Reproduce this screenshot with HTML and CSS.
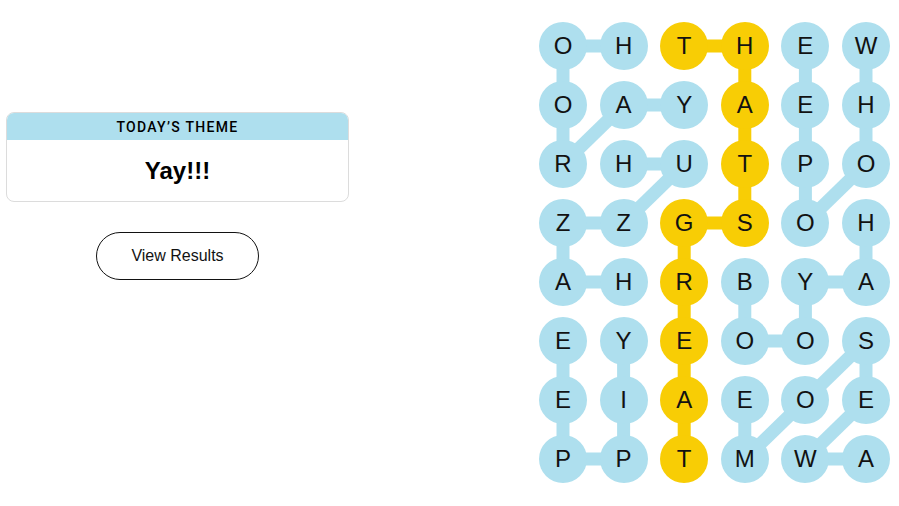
FILE: index.html
```html
<!DOCTYPE html>
<html lang="en">
<head>
<meta charset="utf-8">
<title>Strands</title>
<link rel="stylesheet" href="styles.css">
</head>
<body>
<main class="page">
  <section class="side">
    <div class="theme-card">
      <div class="theme-head">TODAY’S THEME</div>
      <div class="theme-body">Yay!!!</div>
    </div>
    <button class="results-btn" type="button">View Results</button>
  </section>
  <section class="board">
    <svg class="links" width="351" height="461" viewBox="0 0 351 461" aria-hidden="true">
      <g stroke="#aedfee" stroke-width="13" stroke-linecap="butt" fill="none">
        <!-- HOORAY -->
        <line x1="84.6" y1="24" x2="24" y2="24"/>
        <line x1="24" y1="24" x2="24" y2="83"/>
        <line x1="24" y1="83" x2="24" y2="142"/>
        <line x1="24" y1="142" x2="84.6" y2="83"/>
        <line x1="84.6" y1="83" x2="145.2" y2="83"/>
        <!-- HUZZAH -->
        <line x1="84.6" y1="142" x2="145.2" y2="142"/>
        <line x1="145.2" y1="142" x2="84.6" y2="201"/>
        <line x1="84.6" y1="201" x2="24" y2="201"/>
        <line x1="24" y1="201" x2="24" y2="260"/>
        <line x1="24" y1="260" x2="84.6" y2="260"/>
        <!-- WHOOPEE -->
        <line x1="327" y1="24" x2="327" y2="83"/>
        <line x1="327" y1="83" x2="327" y2="142"/>
        <line x1="327" y1="142" x2="266.4" y2="201"/>
        <line x1="266.4" y1="201" x2="266.4" y2="142"/>
        <line x1="266.4" y1="142" x2="266.4" y2="83"/>
        <line x1="266.4" y1="83" x2="266.4" y2="24"/>
        <!-- BOOYAH -->
        <line x1="327" y1="201" x2="327" y2="260"/>
        <line x1="327" y1="260" x2="266.4" y2="260"/>
        <line x1="266.4" y1="260" x2="266.4" y2="319"/>
        <line x1="266.4" y1="319" x2="205.8" y2="319"/>
        <line x1="205.8" y1="319" x2="205.8" y2="260"/>
        <!-- YIPPEE -->
        <line x1="24" y1="319" x2="24" y2="378"/>
        <line x1="24" y1="378" x2="24" y2="437"/>
        <line x1="24" y1="437" x2="84.6" y2="437"/>
        <line x1="84.6" y1="437" x2="84.6" y2="378"/>
        <line x1="84.6" y1="378" x2="84.6" y2="319"/>
        <!-- AWESOME -->
        <line x1="327" y1="437" x2="266.4" y2="437"/>
        <line x1="266.4" y1="437" x2="327" y2="378"/>
        <line x1="327" y1="378" x2="327" y2="319"/>
        <line x1="327" y1="319" x2="266.4" y2="378"/>
        <line x1="266.4" y1="378" x2="205.8" y2="437"/>
        <line x1="205.8" y1="437" x2="205.8" y2="378"/>
      </g>
      <g stroke="#f8cd05" stroke-width="13" fill="none">
        <line x1="145.2" y1="24" x2="205.8" y2="24"/>
        <line x1="205.8" y1="24" x2="205.8" y2="201"/>
        <line x1="205.8" y1="201" x2="145.2" y2="201"/>
        <line x1="145.2" y1="201" x2="145.2" y2="437"/>
      </g>
    </svg>
    <div class="grid">
      <span class="cell">O</span><span class="cell">H</span><span class="cell gold">T</span><span class="cell gold">H</span><span class="cell">E</span><span class="cell">W</span>
      <span class="cell">O</span><span class="cell">A</span><span class="cell">Y</span><span class="cell gold">A</span><span class="cell">E</span><span class="cell">H</span>
      <span class="cell">R</span><span class="cell">H</span><span class="cell">U</span><span class="cell gold">T</span><span class="cell">P</span><span class="cell">O</span>
      <span class="cell">Z</span><span class="cell">Z</span><span class="cell gold">G</span><span class="cell gold">S</span><span class="cell">O</span><span class="cell">H</span>
      <span class="cell">A</span><span class="cell">H</span><span class="cell gold">R</span><span class="cell">B</span><span class="cell">Y</span><span class="cell">A</span>
      <span class="cell">E</span><span class="cell">Y</span><span class="cell gold">E</span><span class="cell">O</span><span class="cell">O</span><span class="cell">S</span>
      <span class="cell">E</span><span class="cell">I</span><span class="cell gold">A</span><span class="cell">E</span><span class="cell">O</span><span class="cell">E</span>
      <span class="cell">P</span><span class="cell">P</span><span class="cell gold">T</span><span class="cell">M</span><span class="cell">W</span><span class="cell">A</span>
    </div>
  </section>
</main>
</body>
</html>
```
FILE: styles.css
```css
html, body {
  margin: 0;
  padding: 0;
  background: #ffffff;
}

body {
  font-family: "Liberation Sans", Arial, sans-serif;
  color: #121212;
}

.page {
  display: flex;
  align-items: flex-start;
  justify-content: space-between;
  width: 899px;
  height: 506px;
  box-sizing: border-box;
  padding: 22px 9px 0 6px;
}

.side {
  display: flex;
  flex-direction: column;
  align-items: center;
  width: 343px;
  margin-top: 90px;
}

.theme-card {
  width: 100%;
  box-sizing: border-box;
  border: 1px solid #dcdcdc;
  border-radius: 8px;
  overflow: hidden;
}

.theme-head {
  height: 27px;
  background: #aedfee;
  display: flex;
  align-items: center;
  justify-content: center;
  font-family: "Roboto", "Liberation Sans", sans-serif;
  font-weight: 500;
  font-size: 14px;
  letter-spacing: 1.3px;
  color: #000;
  margin: -1px -1px 0 -1px;
  padding-top: 1px;
}

.theme-body {
  height: 61px;
  display: flex;
  align-items: center;
  justify-content: center;
  font-size: 24px;
  font-weight: bold;
  color: #000;
}

.results-btn {
  margin-top: 30px;
  width: 163px;
  height: 48px;
  border: 1px solid #121212;
  border-radius: 24px;
  background: #fff;
  font-family: "Liberation Sans", Arial, sans-serif;
  font-size: 16px;
  color: #121212;
  padding: 0;
}

.board {
  position: relative;
  width: 351px;
  height: 461px;
}

.links {
  position: absolute;
  left: 0;
  top: 0;
}

.grid {
  position: relative;
  display: grid;
  grid-template-columns: repeat(6, 48px);
  grid-auto-rows: 48px;
  column-gap: 12.6px;
  row-gap: 11px;
}

.cell {
  width: 48px;
  height: 48px;
  border-radius: 50%;
  background: #aedfee;
  display: flex;
  align-items: center;
  justify-content: center;
  font-size: 24px;
  color: #121212;
}

.cell.gold {
  background: #f8cd05;
}
```
